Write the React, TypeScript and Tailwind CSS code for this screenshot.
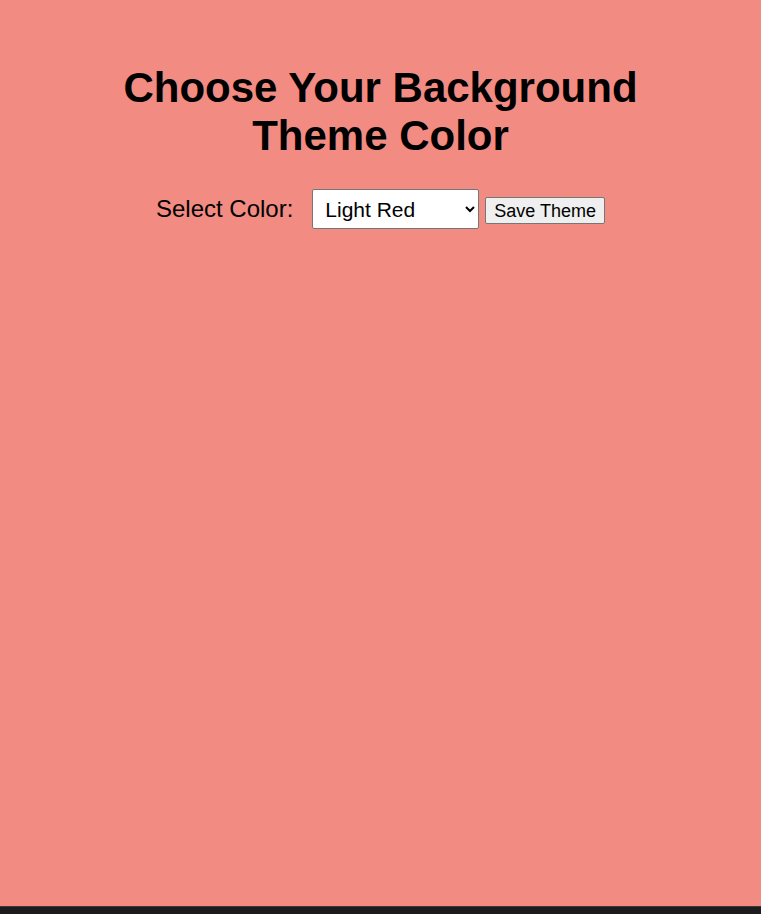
import { useState } from 'react';

const colors: Record<string, string> = {
  'Light Red': '#f28b82',
  'Light Blue': '#aecbfa',
  'Light Green': '#ccff90',
  'Light Yellow': '#fff475',
};

const App = () => {
  const [theme, setTheme] = useState('Light Red');

  return (
    <div className="flex flex-col h-[914px] w-full font-['Liberation_Sans',Arial,sans-serif] text-black">
      <div className="flex-1 bg-[#f28b82] flex flex-col items-center pt-[64px]">
        <h1 className="text-[42px] font-bold leading-[48px] text-center w-[580px]">
          Choose Your Background Theme Color
        </h1>
        <div className="flex items-baseline mt-[29px]">
          <label htmlFor="color" className="text-[24px] mr-[19px]">
            Select Color:
          </label>
          <select
            id="color"
            value={theme}
            onChange={(e) => setTheme(e.target.value)}
            className="w-[167px] h-[40px] bg-white border border-[#767676] rounded-[2px] pl-[8px] text-[21px]"
          >
            {Object.keys(colors).map((c) => (
              <option key={c} value={c}>
                {c}
              </option>
            ))}
          </select>
          <button
            type="button"
            className="ml-[6px] h-[27px] px-[8px] bg-[#efefef] border border-[#767676] rounded-[2px] text-[18px] leading-[22px]"
          >
            Save Theme
          </button>
        </div>
      </div>
      <div className="h-[8px] bg-[#1c1c1c] border-t border-[#3a3a3a]" />
    </div>
  );
};

export default App;
